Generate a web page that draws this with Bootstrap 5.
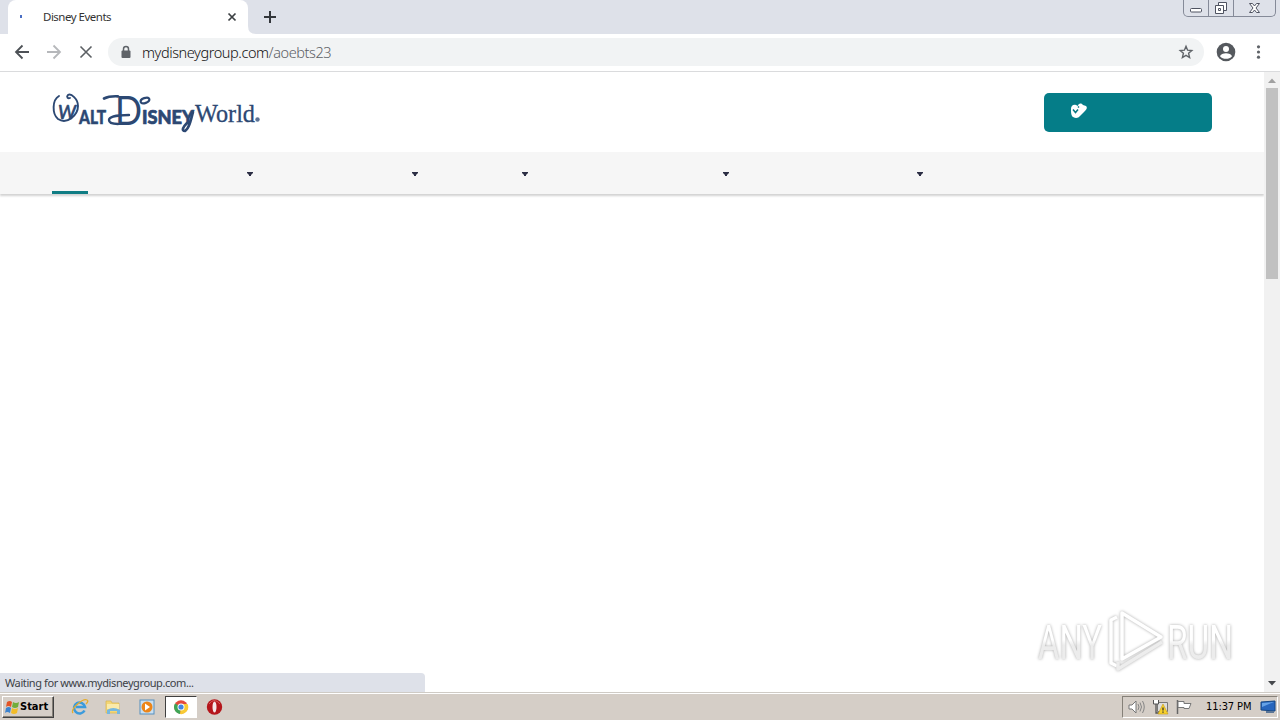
<!DOCTYPE html>
<html lang="en">
<head>
  <meta charset="UTF-8" />
  <meta name="viewport" content="width=device-width, initial-scale=1.0" />
  <title>Disney Events</title>
  <link href="https://cdn.jsdelivr.net/npm/bootstrap@5.3.0/dist/css/bootstrap.min.css" rel="stylesheet" />
  <style>
    body { height: 720px; overflow: hidden; font-family: "DejaVu Sans Condensed", "DejaVu Sans", sans-serif; font-size: 11px; line-height: 1; color: #222; }
    svg { display: block; flex: none; }
    .tab-strip { height: 34px; background: #dee1e9; padding-left: 8px; }
    .browser-tab { width: 240px; height: 34px; background: #fff; border-radius: 8px 8px 0 0; padding: 0 11px; }
    .tab-foot { width: 8px; height: 34px; }
    .tab-title { font-family: "Noto Sans", sans-serif; font-size: 11.5px; letter-spacing: -.5px; color: #333; white-space: nowrap; }
    .window-buttons { width: 93px; height: 17px; border: 1px solid #858a98; border-top: 0; border-radius: 0 0 5px 5px; margin-right: 4px; }
    .window-buttons > div { width: 25px; border-right: 1px solid #858a98; }
    .window-buttons > div:last-child { border-right: 0; }
    .toolbar { height: 38px; border-bottom: 1px solid #dadbdd; padding: 0 16px 1px 14px; }
    .menu-dots { margin-left: 14px; }
    .address { height: 28px; border-radius: 14px; background: #f1f3f4; margin-left: 14px; padding: 0 10px 0 12px; }
    .url { font-family: "Noto Sans", sans-serif; font-weight: 300; font-size: 14.5px; letter-spacing: -.42px; color: #111; white-space: nowrap; }
    .url span { color: #5c6064; }
    .viewport-area { height: 620px; }
    .site-header { height: 80px; padding: 0 52px; }
    .btn-register { width: 168px; height: 39px; background: #057d88; border-radius: 5px; border: 0; padding: 0 26px; }
    .site-nav { height: 42px; background: #f6f6f6; box-shadow: 0 2px 2px rgba(0, 0, 0, .18); padding-left: 52px; }
    .active-item { width: 36px; height: 42px; border-bottom: 3px solid #107d84; }
    .caret-item { height: 42px; padding-top: 20px; }
    .scroll-track { width: 16px; background: #f1f1f1; }
    .scroll-thumb { width: 12px; height: 191px; background: #c1c1c1; }
    .status-bubble { left: 0; top: 673px; width: 425px; height: 19px; background: #dee1e9; border-radius: 0 4px 0 0; padding-left: 5px; font-family: "Noto Sans", sans-serif; font-size: 11px; letter-spacing: -.4px; color: #3c3f45; }
    .watermark { left: 1030px; top: 600px; filter: drop-shadow(0 0 1.5px #aaa); }
    .taskbar { height: 28px; background: #d5cec7; border-top: 1px solid #cfcbc5; box-shadow: inset 0 1px #fff; padding: 0 2px; }
    .start-btn { width: 52px; height: 22px; border: 1px solid; border-color: #fff #404040 #404040 #fff; box-shadow: inset -1px -1px #858078; font-weight: bold; color: #000; padding-left: 1px; }
    .quick-launch { gap: 16px; margin-left: 17px; }
    .task-active { width: 32px; height: 22px; background: #fff; border: 1px solid; border-color: #404040 #fff #fff #404040; margin: 0 9px; }
    .tray { width: 156px; height: 22px; border: 1px solid; border-color: #858078 #fff #fff #858078; padding-left: 5px; gap: 6px; color: #000; }
    .clock { letter-spacing: -.1px; padding-left: 6px; }
  </style>
</head>
<body class="d-flex flex-column bg-white">
  <!-- Tabs and window buttons -->
  <div class="tab-strip d-flex">
    <div class="browser-tab d-flex align-items-center">
      <svg width="24" height="16"><path d="M2 6v3" stroke="#4a6fc4" stroke-width="2" /></svg>
      <span class="tab-title">Disney Events</span>
      <svg class="ms-auto" width="10" height="10"><path d="M1.500 1.500l7 7m0-7l-7 7" stroke="#3c4043" stroke-width="1.700" /></svg>
    </div>
    <svg class="tab-foot" viewBox="0 0 8 34"><path d="M0 26q0 8 8 8H0z" fill="#fff" /></svg>
    <svg class="mt-2 ms-1" width="20" height="18"><path d="M4 9h12M10 3v12" stroke="#33363b" stroke-width="2" /></svg>
    <div class="window-buttons ms-auto d-flex">
      <div class="d-flex align-items-center justify-content-center"><svg width="13" height="16"><rect x=".500" y="8.500" width="11" height="3.500" rx="1" fill="#fff" stroke="#4f5361" /></svg></div>
      <div class="d-flex align-items-center justify-content-center"><svg width="14" height="16"><path d="M4.500 2.500h8v8h-8z" fill="#fff" stroke="#4f5361" /><path d="M1.500 5.500h8v8h-8z" fill="#fff" stroke="#4f5361" /><path d="M4.500 8.500h2v2h-2z" fill="none" stroke="#4f5361" /></svg></div>
      <div class="d-flex align-items-center justify-content-center flex-fill"><svg width="13" height="16"><path d="M1.500 3.500h3l2 2.500 2-2.500h3l-3.500 4.500 3.500 4.500h-3l-2-2.500-2 2.500h-3l3.500-4.500z" fill="#fff" stroke="#4f5361" /></svg></div>
    </div>
  </div>

  <!-- Address bar -->
  <div class="toolbar d-flex align-items-center">
    <svg width="16" height="16"><path d="M15 8H2M8.500 1.500L2 8l6.500 6.500" fill="none" stroke="#4d5156" stroke-width="1.800" /></svg>
    <svg class="ms-3" width="16" height="16"><path d="M1 8h13M7.500 1.500L14 8l-6.500 6.500" fill="none" stroke="#b6b8bb" stroke-width="1.800" /></svg>
    <svg class="ms-3" width="16" height="16"><path d="M2.500 2.500l11 11m0-11l-11 11" stroke="#5c6064" stroke-width="1.600" /></svg>
    <div class="address d-flex align-items-center flex-fill">
      <svg width="22" height="14"><path d="M3.500 6V4a2.500 2.500 0 0 1 5 0v2" fill="none" stroke="#5f6368" stroke-width="1.500" /><rect x="1.500" y="5.500" width="9" height="7.500" rx="1" fill="#5f6368" /></svg>
      <span class="url">mydisneygroup.com<span>/aoebts23</span></span>
      <svg class="ms-auto" width="16" height="16"><path d="M8 2.300l1.600 3.900 4.200.4-3.200 2.700 1 4.200L8 11.300l-3.600 2.200 1-4.200-3.200-2.700 4.200-.4z" fill="none" stroke="#5f6368" stroke-width="1.400" /></svg>
    </div>
    <svg class="ms-2" width="28" height="20"><circle cx="14" cy="10" r="9.300" fill="#55595e" /><circle cx="14" cy="7" r="3" fill="#fff" /><path d="M8 14.200c1-4 11-4 12 0-3 3.500-9 3.500-12 0z" fill="#fff" /></svg>
    <svg class="menu-dots" width="10" height="16"><g fill="#5f6368"><circle cx="4.500" cy="2.800" r="1.600" /><circle cx="4.500" cy="8" r="1.600" /><circle cx="4.500" cy="13.200" r="1.600" /></g></svg>
  </div>

  <!-- Page -->
  <div class="viewport-area d-flex">
    <main class="flex-fill">
      <header class="site-header d-flex align-items-center justify-content-between">
        <svg width="210" height="44" viewBox="52 90 210 44" fill="#2c4873">
          <!-- flourishes around the lettering -->
          <g fill="none" stroke="#2c4873" stroke-linecap="round" stroke-linejoin="round">
            <path d="M59 96c-7 4-7 18-1 23 9 6 20-4 20-13 0-7-7-13-10-11-2 2 0 4 2 3" stroke-width="1.900" />
            <path d="M104 98.500c4-2 8-2.500 14-2.200" stroke-width="2.700" />
            <path d="M118 124c-5 0-9-1-9-4 0-4 12-5 20-5" stroke-width="2.400" />
            <ellipse cx="145" cy="100.500" rx="4.500" ry="2.500" transform="rotate(-20 145 100.500)" stroke-width="2.200" />
            <path d="M193 112c-2 8-4 17-8 19-4 0-2-4 2-8" stroke-width="2.600" />
          </g>
          <g font-family="Lato, sans-serif" font-weight="900" stroke="#2c4873" stroke-linejoin="round">
            <text x="58" y="119" font-size="20" font-weight="400" stroke-width=".7" textLength="18" lengthAdjust="spacingAndGlyphs" font-style="italic">W</text>
            <text x="79" y="124" font-size="19" stroke-width=".5" textLength="27" lengthAdjust="spacingAndGlyphs">ALT</text>
            <text x="115" y="125" font-size="41" font-weight="400" textLength="27" lengthAdjust="spacingAndGlyphs" stroke="none">D</text>
            <text x="142" y="124" font-size="19.500" stroke-width=".7" textLength="52" lengthAdjust="spacingAndGlyphs">ISNEY</text>
          </g>
          <text x="195" y="121.500" font-family="Liberation Serif, serif" font-size="25" textLength="60" lengthAdjust="spacingAndGlyphs" stroke="#2c4873" stroke-width=".3">World</text>
          <circle cx="257.500" cy="119.500" r="2.200" fill="#5c7295" />
        </svg>
        <button class="btn btn-register d-flex align-items-center" aria-label="Register">
          <svg width="18" height="18"><path d="M1 6c0-3 2-5 5-4l2 1c0-2 2-3 4-2l1 1 3 1c2 2 0 4-2 6l-4 4c-2 3-7 2-8 0-1-2-1-4-1-7z" fill="#fff" /><path d="M3 6.500l2.500 3 2.500-3M8 3.500l1 1" fill="none" stroke="#087782" stroke-width="1.500" /></svg>
        </button>
      </header>
      <nav class="site-nav d-flex" id="site-nav">
        <div class="active-item"></div>
      </nav>
    </main>
    <div class="scroll-track d-flex flex-column align-items-center">
      <svg width="16" height="16"><path d="M4 11l4-4.500 4 4.500z" fill="#a0a0a0" /></svg>
      <div class="scroll-thumb"></div>
      <svg class="mt-auto" width="16" height="17"><path d="M4 6h8l-4 4.500z" fill="#45484c" /></svg>
    </div>
  </div>

  <div class="status-bubble position-absolute d-flex align-items-center">Waiting for www.mydisneygroup.com...</div>

  <svg class="watermark position-absolute" width="234" height="80" viewBox="0 0 234 80">
    <defs>
      <linearGradient id="fade" x1="0" y1="0" x2="0" y2="1"><stop offset=".45" stop-color="#fff" /><stop offset=".55" stop-color="#ececec" /></linearGradient>
    </defs>
    <g fill="url(#fade)" font-family="Roboto, sans-serif" font-size="49">
      <text x="8" y="59" textLength="64" lengthAdjust="spacingAndGlyphs">ANY</text>
      <text x="137" y="59" textLength="66" lengthAdjust="spacingAndGlyphs">RUN</text>
    </g>
    <g fill="none" stroke="#fff" stroke-width="3.500" stroke-linejoin="round">
      <path d="M92 13l39 24-39 22z" />
      <path d="M87 17l-6 3v43l6 3" />
      <path d="M132 42l-44 27v-7" stroke="#ededed" />
    </g>
  </svg>

  <!-- Windows taskbar -->
  <footer class="taskbar d-flex align-items-center">
    <div class="start-btn d-flex align-items-center">
      <svg width="16" height="16"><path d="M3 3q3-2 5 0L7 8Q4 6 2 8z" fill="#e35425" /><path d="M9 3q3 2 6 0l-1 5q-3 2-6 0z" fill="#73ad3b" /><path d="M2 9q3-2 5 0l-1 5q-3-2-5 0z" fill="#3c83cf" /><path d="M8 9q3 2 6 0l-1 5q-3 2-6 0z" fill="#f2bc28" /></svg>
      <span>Start</span>
    </div>
    <div class="quick-launch d-flex">
      <svg width="18" height="18"><path d="M13.500 12.500A5.500 5.500 0 1 1 14 9H5" fill="none" stroke="#3b9bdc" stroke-width="2.600" /><path d="M2 15C-1 11 12 0 16 2q2 1-1 4" fill="none" stroke="#e5ad2d" stroke-width="1.300" /></svg>
      <svg width="18" height="18"><path d="M1 3h5l1 2h7v10H1z" fill="#f3d675" stroke="#d8b44e" stroke-width=".7" /><path d="M2 6h12v5H2z" fill="#faeaa9" /><path d="M2 16v-4q6-4 13 0v4h-3v-3H5v3z" fill="#76b8df" /></svg>
      <svg width="17" height="18"><rect x="1" y="2" width="14" height="14" fill="#c9dff1" stroke="#5790bf" /><circle cx="8" cy="9" r="5.500" fill="#ec8519" /><path d="M6 5.500l5 3.500-5 3.500z" fill="#fff" /></svg>
    </div>
    <div class="task-active d-flex align-items-center justify-content-center">
      <svg width="16" height="16"><circle cx="8" cy="8" r="6.800" fill="#e44a3c" /><path d="M8 8L2 4.500A7 7 0 0 0 7 15z" fill="#3ea556" /><path d="M8 8l-1 7a7 7 0 0 0 7.500-10H8z" fill="#f8cb35" /><circle cx="8" cy="8" r="3.500" fill="#fff" /><circle cx="8" cy="8" r="2.600" fill="#4285e4" /></svg>
    </div>
    <svg width="17" height="18"><circle cx="8.500" cy="9" r="7.700" fill="#b5161b" /><path d="M3 6q5-7 11 0" fill="none" stroke="#d65a58" /><ellipse cx="8.500" cy="9" rx="2" ry="5.500" fill="#f5e8e8" /></svg>
    <div class="tray d-flex align-items-center ms-auto">
      <svg width="18" height="16"><path d="M1 6h3l4-4v12l-4-4H1z" fill="#fff" stroke="#777" /><path d="M10 5q2 3 0 6M12 3.500q3 4.500 0 9M14.500 2q3.500 6 0 12" fill="none" stroke="#858585" /></svg>
      <svg width="18" height="16"><path d="M5.500 3.500h10v9h-10z" fill="#ddd" stroke="#777" /><path d="M1.500 1v4h5V1" fill="#fff" stroke="#555" /><path d="M4 5v9h4" fill="none" stroke="#555" stroke-width="1.300" /><path d="M11 5l5 10H6z" fill="#f8d22c" stroke="#c89a10" stroke-width=".6" /><path d="M11 8.500v3m0 1v1.300" stroke="#333" stroke-width="1.300" /></svg>
      <svg width="18" height="16"><path d="M1.500 1v14" stroke="#666" stroke-width="1.500" /><path d="M2 2.500h6v2h7l-2 5H8v-1H2z" fill="#fff" stroke="#777" /></svg>
      <span class="clock">11:37 PM</span>
      <svg class="ms-auto" width="17" height="16"><path d="M1 3l14-1v10l-14-1z" fill="#2866bd" stroke="#164783" /><path d="M2 4l12-1-12 5z" fill="#66a2e6" /><path d="M6 13h8" stroke="#5c7696" stroke-width="2" /></svg>
    </div>
  </footer>

  <script>
    // right edges of the dropdown carets, measured from the end of the active item
    const caretEdges = [165, 330, 440, 641, 835];
    const nav = document.getElementById("site-nav");
    let last = 0;
    caretEdges.forEach(edge => {
      const item = document.createElement("div");
      item.className = "caret-item d-flex justify-content-end";
      item.style.width = `${edge - last}px`;
      item.innerHTML = `<svg width="6" height="5"><path d="M0 0h6v1L4 3v1H2V3L0 1z" fill="#2c2e45"/></svg>`;
      nav.appendChild(item);
      last = edge;
    });
  </script>
  <script src="https://cdn.jsdelivr.net/npm/bootstrap@5.3.0/dist/js/bootstrap.bundle.min.js"></script>
</body>
</html>
